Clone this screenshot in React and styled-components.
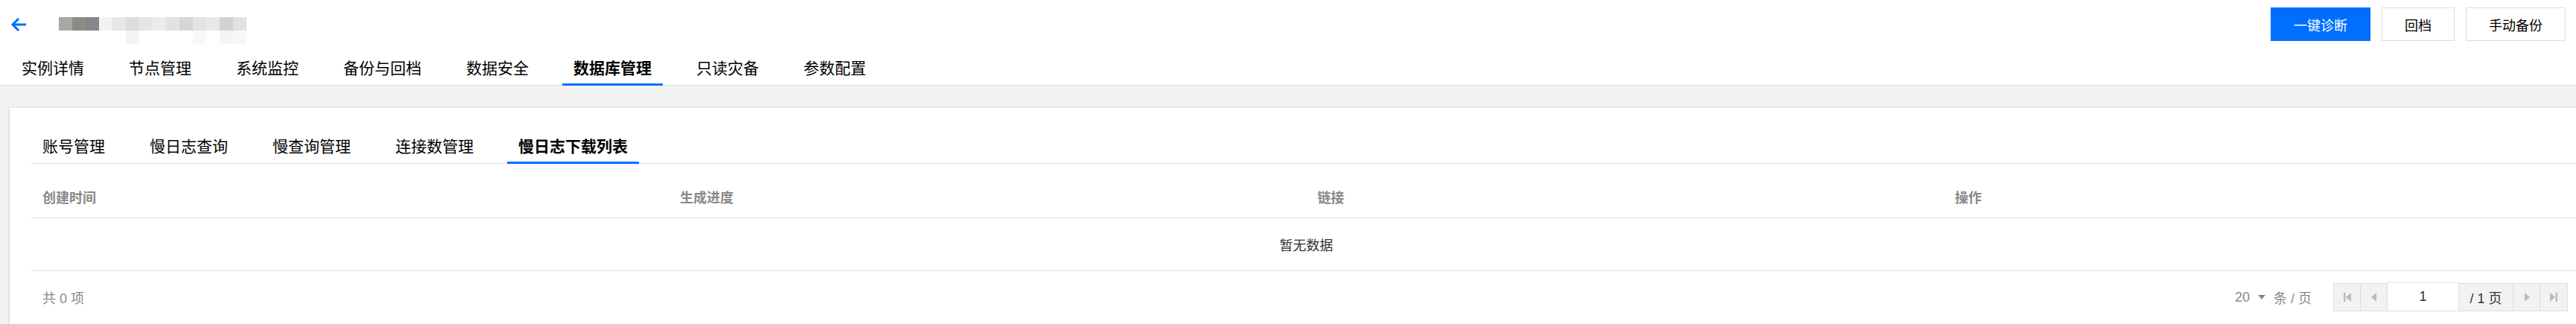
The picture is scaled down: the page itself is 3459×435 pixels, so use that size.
import styled, { createGlobalStyle } from "styled-components"

const GlobalStyle = createGlobalStyle`
    html, body {
        margin: 0;
        padding: 0;
        overflow: hidden;
        background: #f2f2f2;
    }
    body {
        font-family: "Liberation Sans", "Noto Sans CJK SC", sans-serif;
        color: #000;
    }
    * { box-sizing: border-box; }
`

const Header = styled.header`
    background: #fff;
    height: 115px;
    border-bottom: 1px solid #ddd;
    padding: 0 14px;
    display: flex;
    flex-direction: column;
`

const TopRow = styled.div`
    display: flex;
    align-items: center;
    height: 55px;
    padding-top: 10px;
`

const BackBtn = styled.span`
    display: flex;
    width: 21px;
    height: 20px;
`

const Mosaic = styled.div`
    display: grid;
    grid-template-columns: repeat(14, 18px);
    grid-auto-rows: 18px;
    margin-left: 44px;
    align-self: flex-start;
    margin-top: 13px;
`

const Cell = styled.span`
    background: ${p => p.$c};
`

const Actions = styled.div`
    margin-left: auto;
    display: flex;
    gap: 15px;
`

const Button = styled.button`
    height: 45px;
    padding: 0 30px;
    font: inherit;
    font-size: 18px;
    border: 1px solid ${p => p.$primary ? "#006eff" : "#ddd"};
    background: ${p => p.$primary ? "#006eff" : "#fff"};
    color: ${p => p.$primary ? "#fff" : "#000"};
    cursor: pointer;
`

const TabBar = styled.nav`
    display: flex;
    gap: 30px;
    margin-top: auto;
    ${p => p.$line && "border-bottom: 1px solid #ddd;"}
`

const Tab = styled.div`
    padding: ${p => p.$top}px 15px 10px;
    font-size: 21px;
    line-height: 21px;
    margin-bottom: -1px;
    border-bottom: 3px solid ${p => p.$active ? "#006eff" : "transparent"};
    font-weight: ${p => p.$active ? 700 : 400};
    white-space: nowrap;
`

const Main = styled.main`
    padding: 30px 0 0 13px;
`

const Card = styled.section`
    background: #fff;
    box-shadow: 0 1px 4px rgba(0, 0, 0, 0.18);
    padding: 41px 0 0 29px;
    width: 3497px;
    height: 290px;
    overflow: hidden;
`

const Table = styled.div`
    margin-top: 15px;
    width: 3424px;
`

const HeadRow = styled.div`
    display: grid;
    grid-template-columns: repeat(4, 856px);
    height: 58px;
    align-items: center;
    border-bottom: 1px solid #ddd;
`

const HeadCell = styled.div`
    padding: 0 15px;
    font-size: 18px;
    font-weight: 700;
    color: #888;
`

const EmptyRow = styled.div`
    height: 71px;
    display: flex;
    align-items: center;
    justify-content: center;
    border-bottom: 1px solid #ddd;
    font-size: 18px;
    color: #333;
`

const Footer = styled.div`
    display: flex;
    align-items: center;
    width: 3406px;
    padding: 16px 0 0 15px;
    font-size: 18px;
    color: #888;
`

const PageSize = styled.div`
    margin-left: auto;
    display: flex;
    align-items: center;
    gap: 11px;
    margin-right: 30px;
`

const Pager = styled.div`
    display: flex;
    height: 38px;
`

const PagerBtn = styled.span`
    width: ${p => p.$w || 37}px;
    display: flex;
    align-items: center;
    justify-content: center;
    background: ${p => p.$white ? "#fff" : "#f2f2f2"};
    border: 1px solid #ddd;
    margin-left: -1px;
    color: #333;
    font-size: 18px;
    ${p => p.$white && "margin-top: -1px; height: 39px; border-top-color: #e6e6e6;"}
`

const Arrow = () => (
    <svg width="21" height="20" viewBox="0 0 21 20" fill="none" stroke="#006eff" strokeWidth="3" strokeLinejoin="miter">
        <path d="M3 10 H21" />
        <path d="M11 2 L3 10 L11 18" />
    </svg>
)

const Tri = ({ dir = "left", bar }) => (
    <svg width="12" height="14" viewBox="0 0 12 14" fill="#bbb">
        {dir === "left" ? (
            <>
                {bar && <rect x="1" y="1" width="2.5" height="12" />}
                <path d={bar ? "M11 1 L4 7 L11 13 Z" : "M9 1 L2 7 L9 13 Z"} />
            </>
        ) : (
            <>
                <path d={bar ? "M1 1 L8 7 L1 13 Z" : "M3 1 L10 7 L3 13 Z"} />
                {bar && <rect x="8.5" y="1" width="2.5" height="12" />}
            </>
        )}
    </svg>
)

const row1 = ["#a9a8a6", "#8d8b88", "#85868a", "#f1f1f1", "#e7e7e7", "#dcdcdc", "#e5e5e5", "#ececec", "#e2e2e2", "#d6d6d6", "#e3e3e3", "#e8e8e8", "#d1d2d5", "#e1e1e1"]
const row2 = ["#fff", "#fff", "#fff", "#fff", "#fff", "#f3f3f3", "#fff", "#fff", "#fff", "#fff", "#f8f8f8", "#fff", "#f5f5f5", "#f7f7f7"]

const mainTabs = ["实例详情", "节点管理", "系统监控", "备份与回档", "数据安全", "数据库管理", "只读灾备", "参数配置"]
const subTabs = ["账号管理", "慢日志查询", "慢查询管理", "连接数管理", "慢日志下载列表"]
const columns = ["创建时间", "生成进度", "链接", "操作"]

const App = () => {
    return (
        <>
            <GlobalStyle />
            <Header>
                <TopRow>
                    <BackBtn><Arrow /></BackBtn>
                    <Mosaic>
                        {[...row1, ...row2].map((c, i) => <Cell key={i} $c={c} />)}
                    </Mosaic>
                    <Actions>
                        <Button $primary>一键诊断</Button>
                        <Button>回档</Button>
                        <Button>手动备份</Button>
                    </Actions>
                </TopRow>
                <TabBar>
                    {mainTabs.map(t => (
                        <Tab key={t} $top={26} $active={t === "数据库管理"}>{t}</Tab>
                    ))}
                </TabBar>
            </Header>
            <Main>
                <Card>
                    <TabBar $line>
                        {subTabs.map(t => (
                            <Tab key={t} $top={0} $active={t === "慢日志下载列表"}>{t}</Tab>
                        ))}
                    </TabBar>
                    <Table>
                        <HeadRow>
                            {columns.map(c => <HeadCell key={c}>{c}</HeadCell>)}
                        </HeadRow>
                        <EmptyRow>暂无数据</EmptyRow>
                    </Table>
                    <Footer>
                        <span>共 0 项</span>
                        <PageSize>
                            <span>20</span>
                            <svg width="10" height="6" viewBox="0 0 10 6" fill="#888"><path d="M0 0 H10 L5 6 Z" /></svg>
                            <span>条 / 页</span>
                        </PageSize>
                        <Pager>
                            <PagerBtn><Tri dir="left" bar /></PagerBtn>
                            <PagerBtn><Tri dir="left" /></PagerBtn>
                            <PagerBtn $w={97} $white>1</PagerBtn>
                            <PagerBtn $w={74}>/ 1 页</PagerBtn>
                            <PagerBtn><Tri dir="right" /></PagerBtn>
                            <PagerBtn $w={38}><Tri dir="right" bar /></PagerBtn>
                        </Pager>
                    </Footer>
                </Card>
            </Main>
        </>
    )
}

export default App
